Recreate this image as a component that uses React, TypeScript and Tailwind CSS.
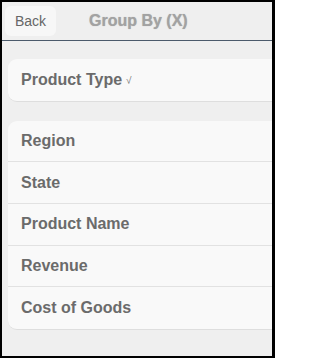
const FIELDS = ["Region", "State", "Product Name", "Revenue", "Cost of Goods"];

function Row({ label, last, children }: { label: string; last?: boolean; children?: React.ReactNode }) {
  return (
    <li
      className={`flex h-[41.7px] items-center pl-[13px] text-[16px] font-bold text-[#6b6b6b] ${
        last ? "" : "border-b border-[#e2e2e2]"
      }`}
    >
      {label}
      {children}
    </li>
  );
}

export default function App() {
  return (
    <div
      className="h-[358px] w-[275px] overflow-hidden border-t-2 border-r-[3px] border-b-2 border-l-2 border-black bg-[#efefef]"
      style={{ fontFamily: '"Liberation Sans", Arial, sans-serif' }}
    >
      {/* header */}
      <header className="relative flex h-[39px] items-center border-b border-[#4b5a6b] bg-[#efefef]">
        <button className="ml-[3px] h-[30px] w-[51px] rounded-[6px] bg-[#f7f7f7] text-[14px] text-[#666]">
          Back
        </button>
        <h1
          className="ml-[33px] text-[16px] font-bold text-[#a2a2a2]"
          style={{ textShadow: "0 0 1px #b5b5b5" }}
        >
          Group By (X)
        </h1>
      </header>

      {/* selected */}
      <ul className="mt-[18px] mr-[-12px] ml-[6px] overflow-hidden rounded-l-[9px] border-b border-[#dedede] bg-[#f9f9f9]">
        <Row label="Product Type" last>
          <span className="ml-[4px] mt-[2px] text-[10px] font-normal text-[#777]">√</span>
        </Row>
      </ul>

      {/* available */}
      <ul className="mt-[19px] mr-[-12px] ml-[6px] overflow-hidden rounded-l-[9px] border-b border-[#dedede] bg-[#f9f9f9]">
        {FIELDS.map((f, i) => (
          <Row key={f} label={f} last={i === FIELDS.length - 1} />
        ))}
      </ul>
    </div>
  );
}
